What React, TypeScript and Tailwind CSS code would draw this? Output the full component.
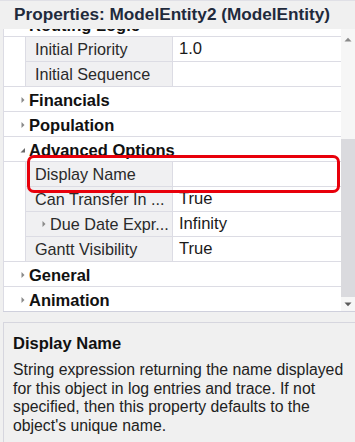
import React from "react";

const LINE = "border-[#dcdce4]";

function RightArrow() {
  return (
    <svg width="6" height="8" viewBox="0 0 6 8" className="shrink-0">
      <path d="M1.5 1 L4.5 4 L1.5 7 Z" fill="#8a8a8a" />
    </svg>
  );
}

function DownArrow() {
  return (
    <svg width="6" height="8" viewBox="0 0 6 8" className="shrink-0">
      <path d="M5 2 L5 6.5 L0.5 6.5 Z" fill="#6a6a6a" />
    </svg>
  );
}

function Category({ label, open }: { label: string; open?: boolean }) {
  return (
    <div className={`h-[25px] flex items-center border-b ${LINE} shrink-0 pt-[2px]`}>
      <div className="w-[25px] flex justify-end pr-[3px]">
        {open ? <DownArrow /> : <RightArrow />}
      </div>
      <span className="font-bold text-[16.5px] text-[#111] leading-none">{label}</span>
    </div>
  );
}

function Prop({
  name,
  value,
  last,
  sub,
}: {
  name: string;
  value: string;
  last?: boolean;
  sub?: boolean;
}) {
  return (
    <div className={`h-[25px] flex shrink-0 ${last ? `border-b ${LINE}` : ""}`}>
      <div className="w-[21px] shrink-0" />
      <div className={`flex flex-1 ${last ? "" : `border-b ${LINE}`}`}>
        <div
          className={`w-[148px] shrink-0 bg-[#f0f0f2] border-l border-r ${LINE} flex items-center ${
            sub ? "pl-[15px]" : "pl-[9px]"
          } text-[16.2px] text-[#2a2a2a] whitespace-nowrap overflow-hidden`}
        >
          {sub && (
            <span className="mr-[3px] flex">
              <RightArrow />
            </span>
          )}
          {name}
        </div>
        <div className="flex-1 flex items-center pl-[6px] text-[16.6px] text-[#1a1a1a]">
          {value}
        </div>
      </div>
    </div>
  );
}

export default function App() {
  return (
    <div
      className="w-[355px] h-[442px] bg-[#f0f0f0] flex flex-col overflow-hidden relative"
      style={{ fontFamily: '"Liberation Sans", Arial, sans-serif' }}
    >
      {/* Header */}
      <div className="h-[29px] shrink-0 flex items-center pl-[14px] border-t border-[#e0e0e6]">
        <span className="font-bold text-[17.2px] text-[#1f2a3c] whitespace-nowrap">
          Properties: ModelEntity2 (ModelEntity)
        </span>
      </div>

      {/* Grid */}
      <div className="h-[282px] shrink-0 flex ml-[3px]">
        <div className={`flex-1 bg-white border-l ${LINE} overflow-hidden flex flex-col`}>
          <div className="flex flex-col -mt-[17px]">
            <Category label="Routing Logic" open />
            <Prop name="Initial Priority" value="1.0" />
            <Prop name="Initial Sequence" value="" last />
            <Category label="Financials" />
            <Category label="Population" />
            <Category label="Advanced Options" open />
            <Prop name="Display Name" value="" />
            <Prop name="Can Transfer In ..." value="True" />
            <Prop name="Due Date Expr..." value="Infinity" sub />
            <Prop name="Gantt Visibility" value="True" last />
            <Category label="General" />
            <Category label="Animation" />
          </div>
        </div>
        {/* Scrollbar */}
        <div className="w-[14px] shrink-0 bg-[#f6f6f6] flex flex-col items-center">
          <div className="h-[18px] flex items-center justify-center pt-[2px]">
            <svg width="8" height="5" viewBox="0 0 8 5">
              <path d="M0.5 4.5 L4 0.8 L7.5 4.5 Z" fill="#8a8a8a" />
            </svg>
          </div>
          <div className="h-[92px]" />
          <div className="w-[14px] h-[158px] bg-[#dadade]" />
          <div className="h-[14px] flex items-center justify-center">
            <svg width="8" height="5" viewBox="0 0 8 5">
              <path d="M0.5 0.5 L4 4.2 L7.5 0.5 Z" fill="#5a5a5a" />
            </svg>
          </div>
        </div>
      </div>

      {/* Gap */}
      <div className="h-[11px] shrink-0 ml-[3px] border-t border-[#cfd0dc]" />

      {/* Description */}
      <div className="flex-1 ml-[3px] border-t border-l border-[#d6d6de] bg-[#f0f0f0] pl-[9px] pr-[4px] pt-[10px]">
        <div className="font-bold text-[16.5px] text-[#111] leading-[20px]">Display Name</div>
        <div className="mt-[8px] text-[15.8px] text-[#222] leading-[18.5px]">
          String expression returning the name displayed for this object in log entries and
          trace. If not specified, then this property defaults to the object's unique name.
        </div>
      </div>

      {/* Highlight box */}
      <div className="absolute left-[27px] top-[155px] w-[313px] h-[38px] border-[3px] border-[#e8000b] rounded-[7px] pointer-events-none" />
    </div>
  );
}
